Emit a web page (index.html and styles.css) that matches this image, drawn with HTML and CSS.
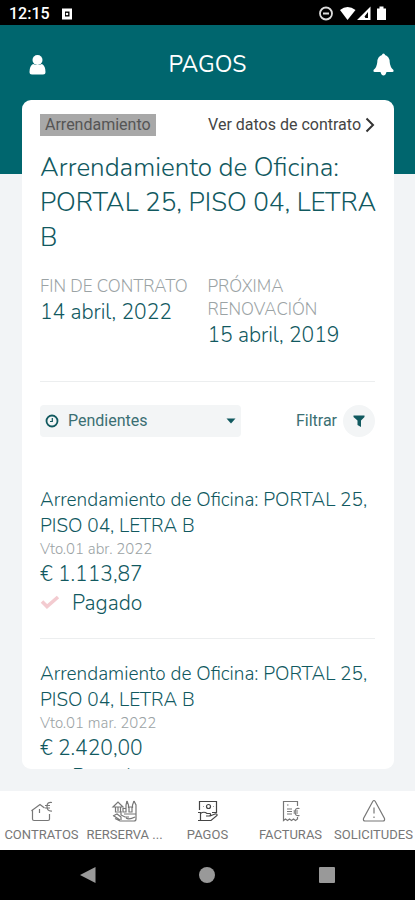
FILE: index.html
```html
<!DOCTYPE html>
<html lang="es">
<head>
<meta charset="utf-8">
<meta name="viewport" content="width=device-width, initial-scale=1">
<title>Pagos</title>
<link rel="stylesheet" href="styles.css">
</head>
<body>
<div class="app">
  <div class="status">
    <span class="status-time">12:15</span>
    <svg class="status-app" width="12" height="12" viewBox="0 0 12 12" aria-hidden="true"><path fill="#fff" fill-rule="evenodd" d="M1 0.500h10v11H1zM4 3.500v5h4.500v-5z"/><circle cx="6" cy="6" r="1.300" fill="#fff"/></svg>
    <svg class="status-icons" width="70" height="16" viewBox="0 0 70 16" aria-hidden="true">
      <circle cx="8" cy="7.500" r="6" fill="none" stroke="#ddd" stroke-width="1.800"/>
      <path d="M5 7.500h6" stroke="#ddd" stroke-width="2"/>
      <path fill="#fff" d="M22 4Q29.500-2 37.500 4L29.500 14z"/>
      <path fill="#fff" fill-rule="evenodd" d="M39 14L52.500 0.500v13.500zM47.500 12h2.500V6l-3.500 4.500z"/>
      <path fill="#fff" d="M59 2.500h2.500V0.500h4v2H68V14h-9z"/>
    </svg>
  </div>

  <header class="top">
    <button class="icon-btn profile" type="button" aria-label="Perfil">
      <svg width="18" height="20" viewBox="0 0 18 20" aria-hidden="true"><circle cx="9.500" cy="5" r="5" fill="#fff"/><path fill="#fff" d="M5 9Q9.500 11 14 9Q17.500 11 17.500 17Q17.500 19.500 15 19.500H4Q1.500 19.500 1.500 17Q1.500 11 5 9z"/></svg>
    </button>
    <h1 class="top-title">PAGOS</h1>
    <button class="icon-btn alerts" type="button" aria-label="Notificaciones">
      <svg width="22" height="23" viewBox="0 0 22 23" aria-hidden="true"><path fill="#fff" d="M9 2Q9 0.500 10.500 0.500T12 2Q16.500 3.500 16.700 9Q17 14 20.500 17Q21 19 19.500 19H13.500Q12.500 22.500 10.500 22.500T7.500 19H1.500Q0 19 .5 17Q4 14 4.300 9Q4.500 3.500 9 2z"/></svg>
    </button>
  </header>

  <main class="card">
    <div class="contract-bar">
      <span class="tag">Arrendamiento</span>
      <a class="details" href="#contrato">Ver datos de contrato
        <svg width="10" height="16" viewBox="0 0 10 16" aria-hidden="true"><path d="M1.500 1.500L8 8l-6.500 6.500" fill="none" stroke="#333" stroke-width="2"/></svg>
      </a>
    </div>
    <h2 class="contract-title">Arrendamiento de Oficina: PORTAL 25, PISO 04, LETRA B</h2>
    <dl class="dates">
      <div><dt>FIN DE CONTRATO</dt><dd>14 abril, 2022</dd></div>
      <div><dt>PRÓXIMA RENOVACIÓN</dt><dd>15 abril, 2019</dd></div>
    </dl>

    <div class="filters">
      <label class="picker">
        <svg width="14" height="14" viewBox="0 0 14 14" aria-hidden="true"><circle cx="7" cy="7" r="5.500" fill="none" stroke="#11595f" stroke-width="1.800"/><path d="M7.300 4v3.500H5" fill="none" stroke="#11595f" stroke-width="1.200"/></svg>
        <select class="picker-select" aria-label="Estado">
          <option>Pendientes</option>
          <option>Pagados</option>
        </select>
        <svg width="10" height="6" viewBox="0 0 10 6" aria-hidden="true"><path fill="#11595f" d="M0.500 0.500h9L5 5.500z"/></svg>
      </label>
      <button class="filter" type="button">Filtrar
        <span class="filter-icon"><svg width="12" height="12" viewBox="0 0 12 12" aria-hidden="true"><path fill="#11595f" d="M0.500 0.500h11v1.500L8 5.500V12L4.500 10V5.500L0.500 2z"/></svg></span>
      </button>
    </div>

    <ul class="payments">
      <li class="payment">
        <h3 class="payment-title">Arrendamiento de Oficina: PORTAL 25, PISO 04, LETRA B</h3>
        <p class="payment-due">Vto.01 abr. 2022</p>
        <p class="payment-amount">€ 1.113,87</p>
        <p class="payment-state"><svg width="20" height="16" viewBox="0 0 20 16" aria-hidden="true"><path d="M2 6.500l5 5L18 2" fill="none" stroke="#f3cbd0" stroke-width="3.600"/></svg>Pagado</p>
      </li>
      <li class="payment">
        <h3 class="payment-title">Arrendamiento de Oficina: PORTAL 25, PISO 04, LETRA B</h3>
        <p class="payment-due">Vto.01 mar. 2022</p>
        <p class="payment-amount">€ 2.420,00</p>
        <p class="payment-state"><svg width="20" height="16" viewBox="0 0 20 16" aria-hidden="true"><path d="M2 6.500l5 5L18 2" fill="none" stroke="#f3cbd0" stroke-width="3.600"/></svg>Pagado</p>
      </li>
    </ul>
  </main>

  <nav class="tabs">
    <a class="tab" href="#contratos">
      <svg width="24" height="24" viewBox="0 0 24 24" aria-hidden="true"><path d="M19.500 15v5q0 1.500-1.500 1.500H4Q2.500 21.500 2.500 20V11L10 5.500l4.500 3.500M2.500 11L1.500 12M9.500 10v4M22 3.500Q17 2.500 17 7.500T22 12M15 6.500h5M15 9h5"/></svg>
      CONTRATOS</a>
    <a class="tab" href="#reservas">
      <svg width="28" height="24" viewBox="0 0 28 24" aria-hidden="true"><path d="M2 8l5-5 5 5zM4.500 8v5h5V8M7 8v4M16 2l-1 4v7M16 2l1.500 4v3M23 2l-1.500 4v3M23 2l2 4v14q0 2-2 2H9l-5-2.500M12 9.500h3v3.500h-3zM18 8h3v5h-3zM13 15h12M10 12v4l4 2h4M2 17l4-2 4 3v3M3 17l6 4M15 19q3 2 9-1"/></svg>
      RERSERVA ...</a>
    <a class="tab tab-active" href="#pagos">
      <svg width="24" height="24" viewBox="0 0 24 24" aria-hidden="true"><path d="M3.500 11V2.500h17v11H16M7 7.500h.5M17 7.500h.5"/><circle cx="12.500" cy="7.500" r="2"/><path d="M2 13.500h2.500v8H2M4.500 14.500Q8 12 11 14.500h3q1.500 1.500-.5 2.500H10M14 17l5-2q2.500-.5 2 1.500L15 21.500H4.500"/></svg>
      PAGOS</a>
    <a class="tab" href="#facturas">
      <svg width="24" height="24" viewBox="0 0 24 24" aria-hidden="true"><path d="M18.500 7V2.500h-14v19l2-1.500 2 1.500 2-1.500 2 1.500 2-1.500 2 1.500 2-1.500V18M8 6h1.500M8 10h5M8 12.500h5M8 15h5M20.500 9.500q-4.500-1-4.500 3.500t4.500 3.500M14.500 12h4.500M14.500 14h4.500"/></svg>
      FACTURAS</a>
    <a class="tab" href="#solicitudes">
      <svg width="24" height="24" viewBox="0 0 24 24" aria-hidden="true"><path d="M10.700 2.500q1.300-2 2.600 0l9.200 17q.5 2.500-1.500 2.500H3q-2 0-1.500-2.500zM12 8.500v6M12 17.500v1.500"/></svg>
      SOLICITUDES</a>
  </nav>

  <div class="system">
    <button class="system-btn" type="button" aria-label="Atrás"><svg width="18" height="18" viewBox="0 0 18 18"><path fill="#999" d="M16.500 1v16L1 9z"/></svg></button>
    <button class="system-btn" type="button" aria-label="Inicio"><svg width="18" height="18" viewBox="0 0 18 18"><circle cx="9" cy="9" r="8" fill="#999"/></svg></button>
    <button class="system-btn" type="button" aria-label="Recientes"><svg width="18" height="18" viewBox="0 0 18 18"><rect x="1" y="1" width="16" height="16" rx="1" fill="#999"/></svg></button>
  </div>
</div>
</body>
</html>
```
FILE: styles.css
```css
* { box-sizing: border-box; }

body, h1, h2, h3, p, ul, dl, dd { margin: 0; padding: 0; }

body { font-family: Nunito, Lato, sans-serif; font-weight: 300; color: #11595f; }

button {
  border: 0;
  padding: 0;
  background: none;
  font: inherit;
  color: inherit;
}

svg { display: block; flex: none; }

.app {
  display: flex;
  flex-direction: column;
  height: 100vh;
  background: #f2f4f6;
}

.status {
  display: flex;
  align-items: center;
  height: 25px;
  padding: 2px 27px 0 9px;
  background: #000;
  color: #fff;
  font: 500 16px/20px Roboto, sans-serif;
}
.status-app { margin-left: 11px; }
.status-icons { margin-left: auto; }

.top {
  display: grid;
  grid-template-columns: 1fr auto 1fr;
  align-items: center;
  padding: 25px 20px 95px;
  background: #00666e;
}
.top-title { color: #fff; font-size: 23px; line-height: 29px; font-weight: 400; }
.profile { justify-self: start; margin-left: 8px; }
.alerts { justify-self: end; }

.card {
  flex: 1;
  min-height: 0;
  margin: -74px 21px 22px 22px;
  padding: 13px 19px 0 18px;
  border-radius: 9px;
  background: #fff;
  overflow: hidden;
}

.contract-bar { display: flex; justify-content: space-between; align-items: center; }
.tag {
  padding: 0 5px;
  background: #a8a8a8;
  color: #555;
  font: 16px/22px Roboto, sans-serif;
}
.details {
  display: flex;
  align-items: center;
  gap: 4px;
  color: #444;
  text-decoration: none;
  font: 16px/24px Roboto, sans-serif;
}
.contract-title {
  margin: 13px -8px 0 0;
  font-size: 26px;
  line-height: 35px;
  font-weight: 300;
}

.dates {
  display: grid;
  grid-template-columns: 1fr 1fr;
  margin-top: 20px;
  padding-bottom: 32px;
  border-bottom: 1px solid #eceeef;
}
.dates dt { color: #9ba3a5; font-size: 17px; line-height: 23px; }
.dates dd { font-size: 21px; line-height: 28px; }

.filters {
  display: flex;
  justify-content: space-between;
  align-items: center;
  margin-top: 23px;
  color: #3b6f73;
  font: 16px/20px Roboto, sans-serif;
}
.picker {
  display: flex;
  align-items: center;
  gap: 9px;
  width: 60%;
  height: 32px;
  padding: 0 5px;
  border-radius: 4px;
  background: #f3f5f6;
}
.picker-select {
  flex: 1;
  min-width: 0;
  border: 0;
  padding: 0;
  appearance: none;
  background: none;
  color: inherit;
  font: inherit;
}
.filter { display: flex; align-items: center; gap: 6px; }
.filter-icon {
  display: grid;
  place-items: center;
  width: 32px;
  height: 32px;
  border-radius: 50%;
  background: #f3f5f6;
}

.payments { margin-top: 28px; list-style: none; }
.payment { padding: 22px 0 20px; border-bottom: 1px solid #eceeef; }
.payment-title { font-size: 19px; line-height: 26px; font-weight: 300; }
.payment-due { color: #9ba3a5; font-size: 15px; line-height: 21px; }
.payment-amount { font-size: 21px; line-height: 28px; }
.payment-state {
  display: flex;
  align-items: center;
  gap: 12px;
  font-size: 21px;
  line-height: 30px;
}

.tabs {
  display: grid;
  grid-template-columns: repeat(5, 1fr);
  height: 59px;
  background: #fff;
}
.tab {
  display: flex;
  flex-direction: column;
  align-items: center;
  gap: 4px;
  min-width: 0;
  padding-top: 8px;
  color: #777;
  text-decoration: none;
  white-space: nowrap;
  font: 13px/16px Roboto, sans-serif;
}
.tab svg { fill: none; stroke: #777; stroke-width: 1.2px; }
.tab-active svg { stroke: #444; }

.system {
  display: grid;
  grid-template-columns: repeat(3, 1fr);
  height: 50px;
  padding: 0 28px;
  background: #000;
}
.system-btn { display: grid; place-items: center; }
```
